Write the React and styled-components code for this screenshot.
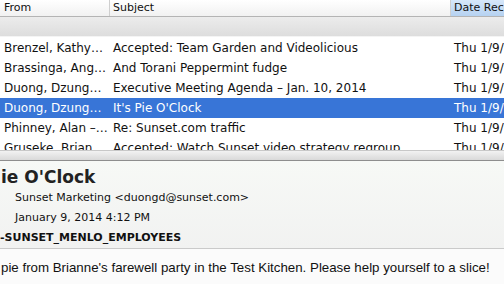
import styled, { createGlobalStyle } from 'styled-components';

const GlobalStyle = createGlobalStyle`
  html, body {
    margin: 0;
    padding: 0;
    width: 504px;
    height: 284px;
    overflow: hidden;
    background: #fff;
  }
  body {
    font-family: "DejaVu Sans", "Lucida Grande", sans-serif;
    color: #111;
  }
`;

const messages = [
  { from: 'Brenzel, Kathy…', subject: 'Accepted: Team Garden and Videolicious', date: 'Thu 1/9/14 3:55 PM' },
  { from: 'Brassinga, Ang…', subject: 'And Torani Peppermint fudge', date: 'Thu 1/9/14 3:58 PM' },
  { from: 'Duong, Dzung…', subject: 'Executive Meeting Agenda – Jan. 10, 2014', date: 'Thu 1/9/14 4:02 PM' },
  { from: 'Duong, Dzung…', subject: "It's Pie O'Clock", date: 'Thu 1/9/14 4:12 PM', selected: true },
  { from: 'Phinney, Alan –…', subject: 'Re: Sunset.com traffic', date: 'Thu 1/9/14 4:20 PM' },
  { from: 'Gruseke, Brian…', subject: 'Accepted: Watch Sunset video strategy regroup', date: 'Thu 1/9/14 4:31 PM' },
];

const Window = styled.div`
  width: 504px;
  height: 284px;
  display: flex;
  flex-direction: column;
  overflow: hidden;
`;

const HeaderRow = styled.div`
  display: grid;
  grid-template-columns: 109px 341px 120px;
  height: 16px;
  background: linear-gradient(#ffffff, #f1f1f1);
  border-bottom: 1px solid #b4b4b4;
  font-size: 11px;
  line-height: 16px;
`;

const HeaderCell = styled.div`
  padding-left: ${p => (p.$first ? 4 : 3)}px;
  border-left: ${p => (p.$first ? 'none' : '1px solid #cfcfcf')};
  background: ${p => (p.$sorted ? 'linear-gradient(#d6e7fa, #b6d2f1)' : 'transparent')};
  white-space: nowrap;
  overflow: hidden;
`;

const GroupBand = styled.div`
  height: 19px;
  background: linear-gradient(#ececec, #dddddd);
  border-bottom: 1px solid #f4f4f4;
`;

const List = styled.div`
  height: 112px;
  overflow: hidden;
  background: #fff;
  padding-top: 1px;
`;

const Row = styled.div`
  display: grid;
  grid-template-columns: 109px 341px 120px;
  height: 20px;
  line-height: 20px;
  font-size: 12px;
  background: ${p => (p.$selected ? '#3875d7' : 'transparent')};
  color: ${p => (p.$selected ? '#fff' : '#111')};
`;

const Cell = styled.div`
  padding-left: 4px;
  white-space: nowrap;
  overflow: hidden;
`;

const Splitter = styled.div`
  height: 9px;
  background: linear-gradient(#f2f2f2, #d9d9d9);
  border-top: 1px solid #c8c8c8;
  border-bottom: 1px solid #8e8e8e;
`;

const Preview = styled.div`
  flex: 1;
  display: flex;
  flex-direction: column;
  background: linear-gradient(#f7f9f6, #efefef);
`;

const MetaBlock = styled.div`
  padding-top: 5px;
  height: 82px;
  border-bottom: 1px solid #cacaca;
`;

const Title = styled.div`
  font-size: 17px;
  font-weight: bold;
  line-height: 22px;
  padding-left: 1px;
  color: #222;
`;

const MetaLine = styled.div`
  font-size: 11px;
  line-height: 20px;
  padding-left: ${p => p.$indent || 0}px;
  font-weight: ${p => (p.$bold ? 'bold' : 'normal')};
  color: #111;
  white-space: nowrap;
`;

const Body = styled.div`
  flex: 1;
  background: #fbfbfb;
  font-family: "Liberation Sans", Arial, sans-serif;
  font-size: 13.3px;
  padding-top: 11px;
  padding-left: 1px;
  color: #111;
  white-space: nowrap;
`;

export default function App() {
  return (
    <Window>
      <GlobalStyle />
      <HeaderRow>
        <HeaderCell $first>From</HeaderCell>
        <HeaderCell>Subject</HeaderCell>
        <HeaderCell $sorted>Date Received</HeaderCell>
      </HeaderRow>
      <GroupBand />
      <List>
        {messages.map((m, i) => (
          <Row key={i} $selected={m.selected}>
            <Cell>{m.from}</Cell>
            <Cell>{m.subject}</Cell>
            <Cell>{m.date}</Cell>
          </Row>
        ))}
      </List>
      <Splitter />
      <Preview>
        <MetaBlock>
          <Title>ie O'Clock</Title>
          <MetaLine $indent={15}>Sunset Marketing &lt;duongd@sunset.com&gt;</MetaLine>
          <MetaLine $indent={15}>January 9, 2014 4:12 PM</MetaLine>
          <MetaLine $bold>-SUNSET_MENLO_EMPLOYEES</MetaLine>
        </MetaBlock>
        <Body>pie from Brianne's farewell party in the Test Kitchen. Please help yourself to a slice!</Body>
      </Preview>
    </Window>
  );
}
